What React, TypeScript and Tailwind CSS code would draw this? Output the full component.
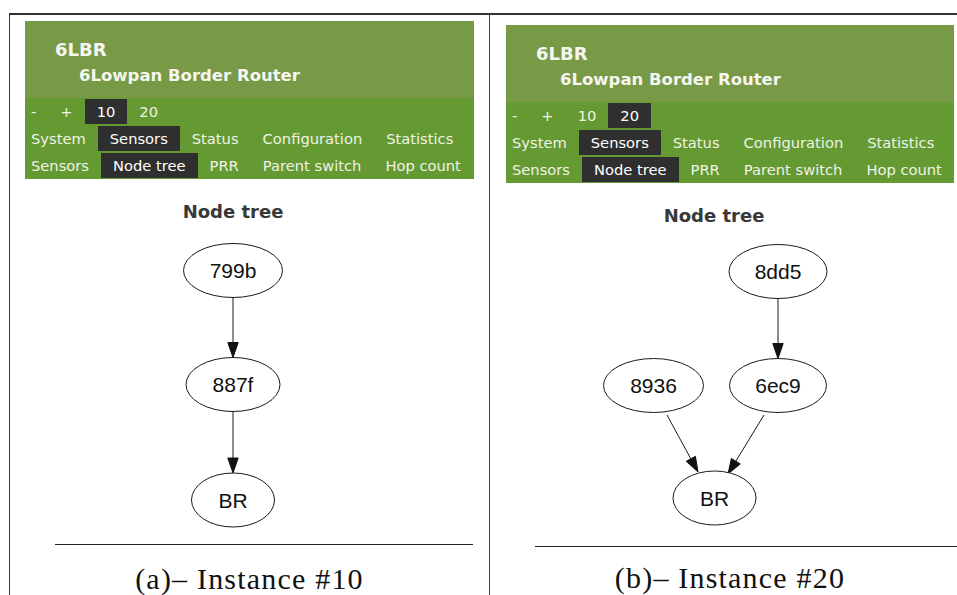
import React from 'react';

type NodeProps = { cx: number; cy: number; rx: number; label: string };
type EdgeProps = { x1: number; y1: number; x2: number; y2: number };

const GraphNode = ({ cx, cy, rx, label }: NodeProps) => (
  <g>
    <ellipse cx={cx} cy={cy} rx={rx} ry={27} fill="white" stroke="#1a1a1a" strokeWidth={1} />
    <text
      x={cx}
      y={cy + 7.5}
      textAnchor="middle"
      fontFamily="'Liberation Sans', Arial, sans-serif"
      fontSize={21}
      fill="#111"
    >
      {label}
    </text>
  </g>
);

// graphviz style edge: thin line ending in a filled arrowhead at (x2, y2)
const Edge = ({ x1, y1, x2, y2 }: EdgeProps) => {
  const len = Math.hypot(x2 - x1, y2 - y1);
  const ux = (x2 - x1) / len;
  const uy = (y2 - y1) / len;
  const bx = x2 - ux * 15;
  const by = y2 - uy * 15;
  const px = -uy * 5.2;
  const py = ux * 5.2;
  return (
    <g>
      <line x1={x1} y1={y1} x2={bx} y2={by} stroke="#1a1a1a" strokeWidth={1} />
      <polygon
        points={`${x2},${y2} ${bx + px},${by + py} ${bx - px},${by - py}`}
        fill="#111"
        stroke="#111"
        strokeWidth={1}
      />
    </g>
  );
};

const NavItem = ({ label, active }: { label: string; active?: boolean }) => (
  <span
    className={
      active
        ? 'my-px h-[25px] px-3 leading-[25px] bg-[#2f2f2f] text-white'
        : 'my-px h-[25px] px-3 leading-[25px] text-[#eef3e6]'
    }
  >
    {label}
  </span>
);

const Header = ({ size }: { size: '10' | '20' }) => (
  <div className="font-['DejaVu_Sans',sans-serif]">
    <div className="h-[77px] bg-[#789a47] pt-[20px] pl-[30px] text-[#f5f6f0]">
      <div className="text-[18px] leading-[18px] font-bold">6LBR</div>
      <div className="mt-[9px] ml-[24px] text-[16.5px] leading-[16.5px] font-bold">6Lowpan Border Router</div>
    </div>
    <div className="bg-[#659a33] text-[14.7px]">
      <div className="-ml-[6px] flex whitespace-nowrap">
        <NavItem label="-" />
        <NavItem label="+" />
        <NavItem label="10" active={size === '10'} />
        <NavItem label="20" active={size === '20'} />
      </div>
      <div className="-ml-[6px] flex whitespace-nowrap">
        <NavItem label="System" />
        <NavItem label="Sensors" active />
        <NavItem label="Status" />
        <NavItem label="Configuration" />
        <NavItem label="Statistics" />
      </div>
      <div className="-ml-[6px] flex whitespace-nowrap">
        <NavItem label="Sensors" />
        <NavItem label="Node tree" active />
        <NavItem label="PRR" />
        <NavItem label="Parent switch" />
        <NavItem label="Hop count" />
      </div>
    </div>
  </div>
);

const Title = () => (
  <div className="mt-[24px] w-[416px] text-center font-['DejaVu_Sans',sans-serif] text-[18px] leading-[18px] font-bold text-[#383838]">
    Node tree
  </div>
);

const Caption = ({ text }: { text: string }) => (
  <div className="text-center font-['Liberation_Serif',serif] text-[30px] leading-[30px] tracking-[1.2px] text-[#111]">
    {text}
  </div>
);

export default function App() {
  return (
    <div className="h-[595px] w-[957px] overflow-hidden bg-white pl-[9px] pt-[13px]">
      <div className="flex h-[582px] border-t-2 border-l border-[#333]">
        {/* (a) instance 10 */}
        <div className="w-[480px] shrink-0 border-r border-[#444]">
          <div className="mt-[6px] ml-[15px] w-[449px]">
            <Header size="10" />
            <Title />
            <svg className="mt-[9px] block" width={449} height={314}>
              <Edge x1={208} y1={67.5} x2={208} y2={127.5} />
              <Edge x1={208} y1={181.5} x2={208} y2={243} />
              <GraphNode cx={208} cy={40.5} rx={49.5} label="799b" />
              <GraphNode cx={208} cy={154.5} rx={47} label="887f" />
              <GraphNode cx={208} cy={270} rx={41.5} label="BR" />
            </svg>
          </div>
          <div className="ml-[45px] h-px w-[418px] bg-[#222]" />
          <div className="mt-[19px]">
            <Caption text="(a)– Instance #10" />
          </div>
        </div>

        {/* (b) instance 20 */}
        <div className="flex-1">
          <div className="mt-[10px] ml-[16px] w-[448px]">
            <Header size="20" />
            <Title />
            <svg className="mt-[9px] block" width={448} height={312}>
              <Edge x1={272} y1={64.5} x2={272} y2={124.5} />
              <Edge x1={161} y1={181} x2={192} y2={238} />
              <Edge x1={258} y1={181} x2={222} y2={240} />
              <GraphNode cx={272} cy={37.5} rx={49} label="8dd5" />
              <GraphNode cx={147.5} cy={151.5} rx={50} label="8936" />
              <GraphNode cx={272} cy={151.5} rx={48.5} label="6ec9" />
              <GraphNode cx={208.5} cy={264} rx={41.5} label="BR" />
            </svg>
          </div>
          <div className="ml-[45px] h-px bg-[#222]" />
          <div className="mt-[16px] ml-[16px] w-[448px]">
            <Caption text="(b)– Instance #20" />
          </div>
        </div>
      </div>
    </div>
  );
}
